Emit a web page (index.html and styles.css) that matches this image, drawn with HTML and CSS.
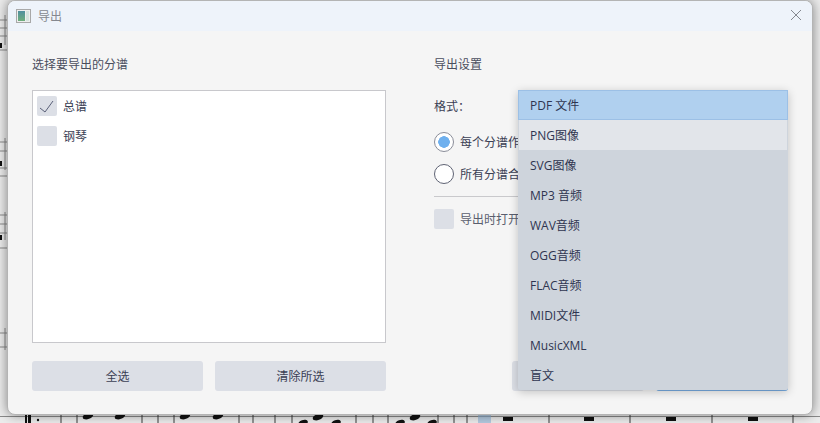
FILE: index.html
```html
<!DOCTYPE html>
<html lang="zh">
<head>
<meta charset="utf-8">
<title>导出</title>
<link rel="stylesheet" href="styles.css">
</head>
<body>
<svg class="score" viewBox="0 0 820 423" width="820" height="423" aria-hidden="true">
  <g class="staff">
    <path d="M0 20H8M0 28H8M0 36H8M0 50H8M0 142H8M0 151H8M0 168H8M0 176H8M0 215H8M0 224H8M0 233H8M0 248H8M0 333H8M0 347H8M0 416.500H820"/>
    <path d="M5 15V45M5 138V170M5 212V240M5 328V350"/>
  </g>
  <g class="ink">
    <rect x="0" y="43" width="2" height="5"/><rect x="0" y="161" width="2" height="5"/><rect x="0" y="235" width="2" height="5"/>
    <rect x="25" y="415" width="2" height="8"/><rect x="28" y="415" width="3" height="8"/><circle cx="38" cy="420" r="1.200"/>
    <ellipse cx="88" cy="416" rx="5.500" ry="3" transform="rotate(-20 88 416)"/><ellipse cx="120" cy="416" rx="5.500" ry="3" transform="rotate(-20 120 416)"/>
    <ellipse cx="185" cy="416" rx="5.500" ry="3" transform="rotate(-20 185 416)"/><ellipse cx="218" cy="416" rx="5.500" ry="3" transform="rotate(-20 218 416)"/>
    <ellipse cx="303" cy="423" rx="5" ry="3" transform="rotate(-20 303 423)"/><ellipse cx="318" cy="417" rx="5.500" ry="3" transform="rotate(-20 318 417)"/><ellipse cx="336" cy="423" rx="5" ry="3" transform="rotate(-20 336 423)"/>
    <ellipse cx="400" cy="423" rx="5" ry="3" transform="rotate(-20 400 423)"/><ellipse cx="415" cy="417" rx="5.500" ry="3" transform="rotate(-20 415 417)"/><ellipse cx="432" cy="423" rx="5" ry="3" transform="rotate(-20 432 423)"/>
    <rect x="503" y="417" width="10" height="4"/><rect x="584" y="417" width="10" height="4"/><rect x="666" y="417" width="10" height="4"/><rect x="748" y="417" width="10" height="4"/>
  </g>
  <path class="bars" d="M61 415V423M77 415V423M142 415V423M158 415V423M174 415V423M239 415V423M253 415V423M275 415V423M292 415V423M356 415V423M373 415V423M388 415V423M438 415V423M454 415V423M467 415V423M549 415V423M630 415V423M712 415V423M793 415V423M793 0V2"/>
  <rect class="selection" x="478" y="415" width="13" height="8"/>
</svg>

<section class="dialog">
  <header class="titlebar">
    <svg class="app-icon" viewBox="0 0 15 14" width="15" height="14" aria-hidden="true">
      <defs>
        <linearGradient id="appfill" x1="0" y1="0" x2="0" y2="1">
          <stop offset="0" stop-color="#4f8f9f"/>
          <stop offset="1" stop-color="#6fae7c"/>
        </linearGradient>
      </defs>
      <rect x="0.500" y="0.500" width="14" height="13" fill="#eeeeee" stroke="#a8a8a8"/>
      <rect x="2" y="2" width="7" height="10" fill="url(#appfill)"/>
      <rect x="10" y="2" width="3" height="10" fill="#d5e3de"/>
    </svg>
    <span class="title">导出</span>
    <svg class="close" viewBox="0 0 12 12" width="12" height="12" aria-hidden="true">
      <path d="M1 1L11 11M11 1L1 11"/>
    </svg>
  </header>

  <div class="content">
    <div class="column">
      <h2 class="heading">选择要导出的分谱</h2>
      <div class="list">
        <div class="list-row">
          <span class="check">
            <svg viewBox="0 0 20 20" width="20" height="20" aria-hidden="true"><path d="M3 12L8 16L16 5"/></svg>
          </span>
          <span>总谱</span>
        </div>
        <div class="list-row">
          <span class="check"></span>
          <span>钢琴</span>
        </div>
      </div>
      <div class="buttons">
        <button class="btn">全选</button>
        <button class="btn">清除所选</button>
      </div>
    </div>

    <div class="column">
      <h2 class="heading">导出设置</h2>
      <div class="settings">
        <div class="format-row">格式：</div>
        <label class="radio-row"><span class="radio on"></span><span>每个分谱作</span></label>
        <label class="radio-row"><span class="radio"></span><span>所有分谱合</span></label>
        <hr class="divider">
        <label class="check-row"><span class="check"></span><span>导出时打开</span></label>
      </div>
      <div class="buttons end">
        <button class="btn wide"></button>
        <button class="btn primary"></button>
      </div>
    </div>
  </div>
</section>

<ul class="popup">
  <li class="item current">PDF 文件</li>
  <li class="item hover">PNG图像</li>
  <li class="item">SVG图像</li>
  <li class="item">MP3 音频</li>
  <li class="item">WAV音频</li>
  <li class="item">OGG音频</li>
  <li class="item">FLAC音频</li>
  <li class="item">MIDI文件</li>
  <li class="item">MusicXML</li>
  <li class="item">盲文</li>
</ul>
</body>
</html>
```

FILE: styles.css
```css
* { box-sizing: border-box; }

html, body {
  margin: 0;
  width: 820px;
  height: 423px;
  overflow: hidden;
  background: #ececec;
  font-family: "Open Sans", "Noto Sans CJK SC", sans-serif;
  font-size: 12px;
  color: #3b4054;
}

.score { position: absolute; left: 0; top: 0; }
.staff path { fill: none; stroke: #8a8a8a; stroke-width: 1; }
.ink { fill: #111111; }
.bars { fill: none; stroke: #3a3a3a; stroke-width: 1; }
.selection { fill: #8fb4d8; opacity: .6; }

.dialog {
  position: absolute;
  left: 7px;
  top: 0;
  width: 806px;
  height: 415px;
  display: flex;
  flex-direction: column;
  background: #f5f5f5;
  border: 1px solid #b4b4b4;
  border-radius: 8px;
  box-shadow: 0 0 12px rgba(0, 0, 0, .45);
  overflow: hidden;
}

.titlebar {
  height: 30px;
  flex: none;
  display: flex;
  align-items: center;
  padding: 0 8px;
  background: #eef3fa;
}

.app-icon { margin-right: 7px; }
.title { color: #85888f; font-size: 12px; }
.close { margin-left: auto; margin-right: 2px; margin-bottom: 2px; }
.close path { fill: none; stroke: #85888f; stroke-width: 1; }

.content {
  flex: 1;
  display: grid;
  grid-template-columns: 354px 354px;
  column-gap: 48px;
  padding: 25px 24px 23px;
}

.column { display: flex; flex-direction: column; min-width: 0; }

.heading {
  margin: 0 0 16px;
  height: 18px;
  line-height: 18px;
  font-size: 12px;
  font-weight: 400;
  color: #4a4e5e;
}

.list {
  height: 253px;
  padding: 0 4px;
  background: #ffffff;
  border: 1px solid #c8c8cc;
}

.list-row {
  height: 30px;
  display: flex;
  align-items: center;
  gap: 6px;
}

.check {
  width: 20px;
  height: 20px;
  flex: none;
  display: block;
  background: #dcdfe6;
  border-radius: 2px;
}
.check svg { display: block; }
.check path { fill: none; stroke: #5a6078; stroke-width: 1; }

.buttons {
  margin-top: 18px;
  display: grid;
  grid-template-columns: 1fr 1fr;
  gap: 12px;
}
.buttons.end { margin-top: auto; grid-template-columns: 132px 132px; justify-content: end; }

.btn {
  height: 30px;
  padding: 0;
  border: 0;
  border-radius: 3px;
  background: #dcdfe6;
  font: inherit;
  color: #3b4054;
}
.btn.primary { background: #b0d0ef; border-bottom: 1px solid #78ace2; }

.settings { display: flex; flex-direction: column; }

.format-row { height: 24px; margin-top: 5px; margin-bottom: 13px; line-height: 24px; color: #3b4054; }

.radio-row {
  height: 20px;
  margin-bottom: 12px;
  display: flex;
  align-items: center;
  gap: 6px;
  white-space: nowrap;
}

.radio {
  width: 20px;
  height: 20px;
  flex: none;
  border: 1.500px solid #5f6374;
  border-radius: 50%;
  background: #ffffff;
}
.radio.on {
  border-color: #8a8d99;
  background: radial-gradient(circle, #6fb0ee 0 5.500px, #ffffff 6px);
}

.divider { width: 100%; margin: 0 0 12px; border: 0; border-top: 1px solid #c9c9cc; }

.check-row {
  display: flex;
  align-items: center;
  gap: 6px;
  color: #5a5e6e;
  white-space: nowrap;
}

.popup {
  position: absolute;
  left: 518px;
  top: 90px;
  width: 270px;
  height: 300px;
  margin: 0;
  padding: 0;
  list-style: none;
  background: #ced4dc;
  border-radius: 2px;
  box-shadow: 0 2px 10px rgba(0, 0, 0, .22);
}

.item {
  height: 30px;
  padding: 1px 0 0 12px;
  line-height: 30px;
  color: #2f3550;
}
.item.current { background: #b0d0ef; box-shadow: inset 0 0 0 1px #9cc0e6; }
.item.hover { background: #e2e5ea; margin: 0 1px; padding-left: 11px; }
```
